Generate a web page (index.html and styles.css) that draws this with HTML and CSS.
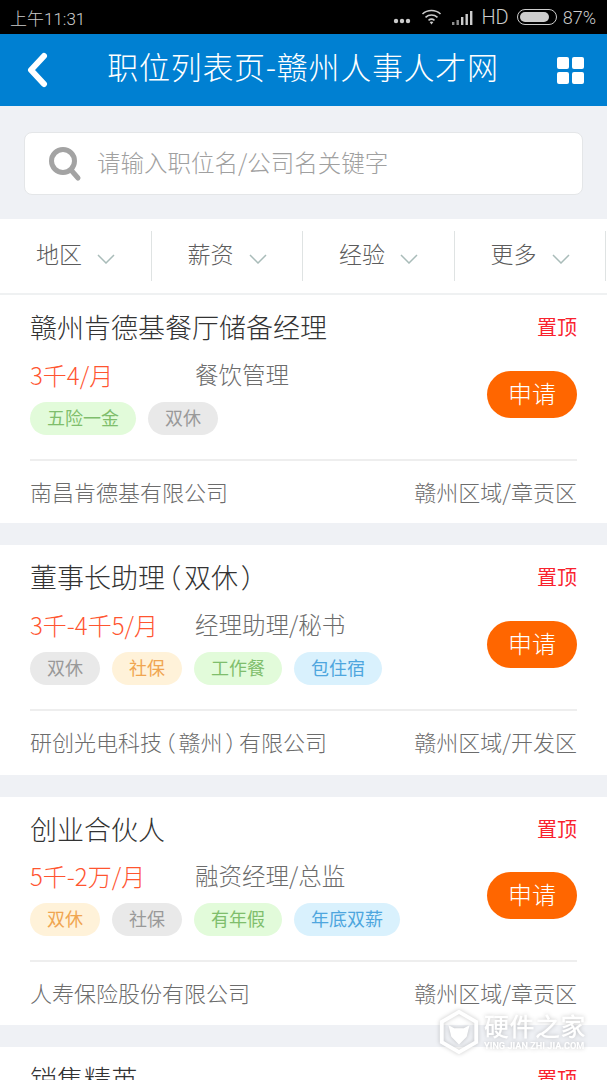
FILE: index.html
```html
<!DOCTYPE html>
<html lang="zh-CN">
<head>
  <meta charset="UTF-8">
  <meta name="viewport" content="width=device-width, initial-scale=1.0">
  <title>职位列表页-赣州人事人才网</title>
  <link rel="stylesheet" href="styles.css">
</head>
<body>
  <div class="screen">
    <div class="status">
      <span class="status__time">上午11:31</span>
      <div class="status__right">
        <svg class="status__dots" width="18" height="6" viewBox="0 0 18 6"><circle cx="3" cy="3" r="2.2" fill="#ccc"/><circle cx="9" cy="3" r="2.2" fill="#ccc"/><circle cx="15" cy="3" r="2.2" fill="#ccc"/></svg>
        <svg class="status__wifi" width="21" height="16" viewBox="0 0 20 16" fill="none" stroke="#ccc" stroke-width="1.6"><path d="M1 5c5-4.600 13-4.600 18 0"/><path d="M4 8.300c3.500-3 8.500-3 12 0"/><path d="M7 11.300c1.800-1.400 4.200-1.400 6 0"/><path d="M10 15.500l-1.900-2.400c1.100-.8 2.700-.8 3.800 0z" fill="#ccc" stroke="none"/></svg>
        <svg class="status__signal" width="21" height="15" viewBox="0 0 21 15" fill="#ccc"><rect x="0" y="12" width="2.400" height="3" opacity=".7"/><rect x="4.500" y="10" width="2.400" height="5" opacity=".7"/><rect x="9" y="7" width="2.400" height="8"/><rect x="13.500" y="4" width="2.400" height="11"/><rect x="18" y="1" width="2.400" height="14"/></svg>
        <span class="status__hd">HD</span>
        <span class="battery"><span class="battery__fill"></span></span>
        <span class="status__pct">87%</span>
      </div>
    </div>

    <header class="head">
      <svg class="head__back" width="24" height="36" viewBox="0 0 24 36" fill="none" stroke="#fff" stroke-width="6" stroke-linecap="round" stroke-linejoin="round"><path d="M19 4L6 18l13 14"/></svg>
      <h1 class="head__title">职位列表页-赣州人事人才网</h1>
      <div class="head__grid"><i></i><i></i><i></i><i></i></div>
    </header>

    <div class="search">
      <div class="search__box">
        <svg class="search__icon" width="36" height="36" viewBox="0 0 34 36" fill="none" stroke="#a3a3a3"><circle cx="15" cy="15" r="11.500" stroke-width="5"/><path d="M23 24l7 8" stroke-width="5" stroke-linecap="round"/></svg>
        <span class="search__hint">请输入职位名/公司名关键字</span>
      </div>
    </div>

    <nav class="filter">
      <div class="filter__item"><span class="filter__label">地区</span><svg width="18" height="10" viewBox="0 0 18 10" fill="none" stroke="#a9bcb9" stroke-width="1.500"><path d="M1 1l8 8 8-8"/></svg></div>
      <div class="filter__item"><span class="filter__label">薪资</span><svg width="18" height="10" viewBox="0 0 18 10" fill="none" stroke="#a9bcb9" stroke-width="1.500"><path d="M1 1l8 8 8-8"/></svg></div>
      <div class="filter__item"><span class="filter__label">经验</span><svg width="18" height="10" viewBox="0 0 18 10" fill="none" stroke="#a9bcb9" stroke-width="1.500"><path d="M1 1l8 8 8-8"/></svg></div>
      <div class="filter__item"><span class="filter__label">更多</span><svg width="18" height="10" viewBox="0 0 18 10" fill="none" stroke="#a9bcb9" stroke-width="1.500"><path d="M1 1l8 8 8-8"/></svg></div>
    </nav>

    <section class="job job--first">
      <div class="job__top">
        <h2 class="job__name">赣州肯德基餐厅储备经理</h2>
        <span class="job__pin">置顶</span>
      </div>
      <div class="job__mid">
        <div class="job__info">
          <div class="job__line"><span class="job__pay">3千4/月</span><span class="job__type">餐饮管理</span></div>
          <div class="tags"><span class="tag tag--green">五险一金</span><span class="tag tag--gray">双休</span></div>
        </div>
        <span class="job__apply">申请</span>
      </div>
      <div class="job__foot"><span>南昌肯德基有限公司</span><span>赣州区域/章贡区</span></div>
    </section>

    <section class="job">
      <div class="job__top">
        <h2 class="job__name">董事长助理<span class="paren">（</span>双休<span class="paren">）</span></h2>
        <span class="job__pin">置顶</span>
      </div>
      <div class="job__mid">
        <div class="job__info">
          <div class="job__line"><span class="job__pay">3千-4千5/月</span><span class="job__type">经理助理/秘书</span></div>
          <div class="tags"><span class="tag tag--gray">双休</span><span class="tag tag--yellow">社保</span><span class="tag tag--green">工作餐</span><span class="tag tag--blue">包住宿</span></div>
        </div>
        <span class="job__apply">申请</span>
      </div>
      <div class="job__foot"><span>研创光电科技<span class="paren">（</span>赣州<span class="paren">）</span>有限公司</span><span>赣州区域/开发区</span></div>
    </section>

    <section class="job job--third">
      <div class="job__top">
        <h2 class="job__name">创业合伙人</h2>
        <span class="job__pin">置顶</span>
      </div>
      <div class="job__mid">
        <div class="job__info">
          <div class="job__line"><span class="job__pay">5千-2万/月</span><span class="job__type">融资经理/总监</span></div>
          <div class="tags"><span class="tag tag--yellow">双休</span><span class="tag tag--gray">社保</span><span class="tag tag--green">有年假</span><span class="tag tag--blue">年底双薪</span></div>
        </div>
        <span class="job__apply">申请</span>
      </div>
      <div class="job__foot"><span>人寿保险股份有限公司</span><span>赣州区域/章贡区</span></div>
    </section>

    <section class="job">
      <div class="job__top">
        <h2 class="job__name">销售精英</h2>
        <span class="job__pin">置顶</span>
      </div>
    </section>

    <div class="mark">
      <svg class="mark__logo" width="40" height="44" viewBox="0 0 40 46"><path d="M20 2L38 12.500v21L20 44 2 33.500v-21z" fill="none" stroke="#fff" stroke-width="4"/><path d="M9 16l6 3h10l6-3-3 12-8 8-8-8z" fill="#fff"/></svg>
      <div class="mark__text">
        <span class="mark__cn">硬件之家</span>
        <span class="mark__en">YING JIAN ZHI JIA.COM</span>
      </div>
    </div>
  </div>
</body>
</html>
```

FILE: styles.css
```css
*,
*::before,
*::after {
  box-sizing: border-box;
}
html,
body {
  margin: 0;
  padding: 0;
}
body {
  background: #eff1f5;
  font-family: "Noto Sans CJK SC", "Roboto", sans-serif;
  font-weight: 300;
}
h1,
h2 {
  margin: 0;
  font-weight: 300;
}
.screen {
  position: relative;
  width: 607px;
  height: 1080px;
  overflow: hidden;
  background: #eff1f5;
}

/* status bar */
.status {
  height: 34px;
  background: #000;
  color: #ccc;
  display: flex;
  align-items: center;
  justify-content: space-between;
  padding: 0 11px 0 10px;
  font-family: "Roboto", "Noto Sans CJK SC", sans-serif;
  font-size: 17px;
}
.status__right {
  display: flex;
  align-items: center;
  gap: 8px;
  font-size: 18px;
}
.status__dots {
  margin-top: 8px;
  margin-right: 2px;
}
.status__signal {
  margin-left: 2px;
}
.status__hd {
  font-size: 20px;
}
.battery {
  width: 40px;
  height: 16px;
  border: 1.500px solid #ccc;
  border-radius: 8px;
  padding: 2px;
  display: block;
  margin-right: -2px;
}
.battery__fill {
  display: block;
  width: 85%;
  height: 100%;
  background: #ccc;
  border-radius: 5px;
}

/* header */
.head {
  height: 72px;
  background: #0080d2;
  display: flex;
  align-items: center;
  justify-content: space-between;
  padding: 0 23px 0 25px;
  color: #fff;
}
.head__title {
  font-size: 31px;
  letter-spacing: 0.700px;
  line-height: 40px;
  margin-bottom: 8px;
}
.head__grid {
  display: grid;
  grid-template-columns: 12px 12px;
  grid-template-rows: 12px 12px;
  gap: 3px;
}
.head__grid i {
  background: #fff;
  border-radius: 2px;
}

/* search */
.search {
  padding: 26px 24px 24px;
}
.search__box {
  height: 63px;
  background: #fff;
  border: 1px solid #e4e6e8;
  border-radius: 8px;
  display: flex;
  align-items: center;
  padding: 0 0 0 22px;
  gap: 14px;
}
.search__hint {
  font-size: 23.500px;
  color: #a0a0a0;
  margin-bottom: 4px;
}

/* filter */
.filter {
  height: 76px;
  background: #fff;
  border-bottom: 2px solid #eff1f2;
  display: flex;
  padding-top: 12px;
}
.filter__item {
  width: 151.500px;
  height: 50px;
  border-right: 1px solid #dfe3e3;
  display: flex;
  align-items: center;
  padding-left: 36px;
  gap: 15px;
  font-size: 23px;
  color: #5c5c5c;
}
.filter__label {
  margin-bottom: 6px;
}
.filter__item svg {
  margin-top: 5px;
}

/* job cards */
.job {
  background: #fff;
  padding: 0 30px;
  height: 230px;
  margin-bottom: 22px;
}
.job--first,
.job--third {
  height: 228px;
}
.job__top {
  display: flex;
  justify-content: space-between;
  align-items: center;
  height: 63px;
}
.job--third .job__top {
  height: 62px;
}
.job__name {
  font-size: 27px;
  color: #333;
}
.job__pin {
  font-size: 20px;
  font-weight: 400;
  color: #f9222e;
}
.job__mid {
  display: flex;
  justify-content: space-between;
  height: 103px;
  border-bottom: 2px solid #eeeeee;
}
.job__line {
  display: flex;
  height: 28px;
  align-items: center;
  font-size: 23.500px;
  margin-top: 2px;
  margin-bottom: 14px;
}
.job__pay {
  width: 165px;
  font-size: 24px;
  color: #ff5530;
}
.job__type {
  color: #6c6c6c;
}
.job__apply {
  width: 90px;
  height: 47px;
  margin-top: 13px;
  padding-bottom: 5px;
  background: #ff6600;
  color: #fff;
  border-radius: 24px;
  display: flex;
  align-items: center;
  justify-content: center;
  font-size: 24px;
}
.tags {
  display: flex;
  gap: 12px;
}
.tag {
  height: 33px;
  padding: 0 17px 4px;
  border-radius: 17px;
  display: flex;
  align-items: center;
  font-size: 18px;
  font-weight: 400;
}
.tag--green {
  background: #e2fbda;
  color: #7fbe6c;
}
.tag--gray {
  background: #e9e9e9;
  color: #999;
}
.tag--yellow {
  background: #fff2d9;
  color: #f0a550;
}
.tag--blue {
  background: #d9f1fd;
  color: #4ea6de;
}
.job__foot {
  display: flex;
  justify-content: space-between;
  align-items: center;
  height: 60px;
  font-size: 22px;
  color: #6c6c6c;
}
/* parens are narrower than a full em in the original */
.paren {
  font-feature-settings: "halt";
  padding: 0 2.750px;
}

/* watermark, sits over the list */
.mark {
  position: absolute;
  left: 439px;
  top: 1010px;
  display: flex;
  gap: 5px;
  color: #fff;
  filter: drop-shadow(0 0 2px rgba(0, 0, 0, 0.22));
}
.mark__text {
  display: flex;
  flex-direction: column;
}
.mark__cn {
  font-size: 25px;
  line-height: 30px;
  font-weight: 500;
  letter-spacing: 0.500px;
}
.mark__en {
  font-size: 9.200px;
  line-height: 12px;
  font-family: "Roboto", sans-serif;
  font-weight: 700;
}
```
